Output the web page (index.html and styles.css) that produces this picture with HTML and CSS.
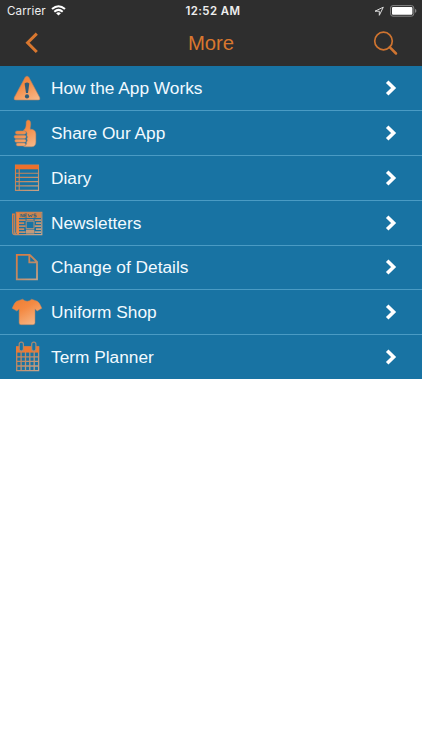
FILE: index.html
```
<!DOCTYPE html>
<html lang="en">
<head>
<meta charset="utf-8">
<title>More</title>
<link rel="stylesheet" href="styles.css">
</head>
<body>
<svg class="defs" width="0" height="0" aria-hidden="true">
  <defs>
    <linearGradient id="warm" gradientUnits="userSpaceOnUse" x1="8" y1="3" x2="24" y2="30">
      <stop offset="0" stop-color="#ed8037"/><stop offset=".35" stop-color="#f48a43"/><stop offset="1" stop-color="#f6ba8c"/>
    </linearGradient>
    <linearGradient id="muted" gradientUnits="userSpaceOnUse" x1="4" y1="3" x2="27" y2="30">
      <stop offset="0" stop-color="#e17a3a"/><stop offset=".5" stop-color="#bd8965"/><stop offset="1" stop-color="#c6a58c"/>
    </linearGradient>
  </defs>
</svg>
<header class="top">
  <div class="status">
    <div class="carrier"><span>Carrier</span>
      <svg width="15" height="11" viewBox="0 0 15 11" fill="none" stroke="#fff" stroke-width="2"><path d="M1 4.1Q7.5-1.7 14 4.1M3.3 6.7Q7.5 3 11.7 6.7"/><path d="M5.1 8.2Q7.5 6.2 9.9 8.2L7.5 10.6Z" fill="#fff" stroke="none"/></svg>
    </div>
    <div class="time">12:52 AM</div>
    <div class="indicators">
      <svg width="11" height="11" viewBox="0 0 11 11" fill="none" stroke="#ddd" stroke-width="1"><path d="M9.3 1.2L1 5.2H5.3V9.3Z"/></svg>
      <svg width="27" height="12" viewBox="0 0 27 12"><rect x=".6" y=".6" width="23.2" height="10.6" rx="2.4" fill="none" stroke="#858585"/><rect x="2" y="2" width="20.4" height="7.8" rx="1" fill="#fff"/><path d="M25 4Q26.4 4.3 26.4 5.9T25 7.8Z" fill="#858585"/></svg>
    </div>
  </div>
  <nav class="nav">
    <svg class="back" width="14" height="22" viewBox="0 0 14 22" fill="none" stroke="#d8772f" stroke-width="3"><path d="M11.8 1.6L2.6 10.8 11.8 20"/></svg>
    <h1>More</h1>
    <svg class="search" width="25" height="25" viewBox="0 0 25 25" fill="none" stroke="#cf7430"><circle cx="10.5" cy="10" r="8.8" stroke-width="1.7"/><path d="M16.7 16.2L23 22.5" stroke-width="2.5" stroke-linecap="round"/></svg>
  </nav>
</header>
<main class="menu">
  <div class="row">
    <svg class="icon" viewBox="0 0 32 32"><path d="M16 4.2Q17.2 4.2 18 5.6L28.6 25.2Q29.8 28 27.2 28H4.8Q2.2 28 3.4 25.2L14 5.6Q14.8 4.2 16 4.2Z" fill="url(#warm)" stroke="#a98369" stroke-width=".6"/><path d="M13.6 11.4Q16 9.5 18.3 11.4L17 21H15Z" fill="#315c78"/><circle cx="16" cy="24.4" r="2.1" fill="#315c78"/></svg>
    <span>How the App Works</span><svg class="go" viewBox="0 0 12 16"><path d="M2.2 1.8L8.6 8 2.2 14.2"/></svg>
  </div>
  <div class="row">
    <svg class="icon" viewBox="0 0 32 32"><path d="M12.2 13.5C15.6 11.6 15 7.2 15.2 5.1C15.5 2.4 18.9 2.4 19.5 5.1C20.2 8 19 10 19.2 12.3C22.3 12 24.9 13.8 24.9 17V25Q24.9 29.6 20.5 29.8H14Q12.7 29.8 12.4 28.8Q16.4 28.2 15.5 25.2Q17.2 23.8 15.9 21.8Q17.4 20 15.8 18.2Q17 15.2 14.2 14.3Z" fill="url(#warm)" stroke="#ae8568" stroke-width=".5"/><g fill="url(#warm)" stroke="#ae8568" stroke-width=".5"><rect x="4.4" y="13.9" width="10.6" height="3.3" rx="1.6"/><rect x="3.1" y="18.2" width="12" height="3.2" rx="1.6"/><rect x="3.8" y="22.3" width="11.2" height="3" rx="1.5"/><rect x="5.3" y="26.1" width="9.2" height="2.8" rx="1.4"/></g></svg>
    <span>Share Our App</span><svg class="go" viewBox="0 0 12 16"><path d="M2.2 1.8L8.6 8 2.2 14.2"/></svg>
  </div>
  <div class="row">
    <svg class="icon" viewBox="0 0 32 32" fill="none" stroke="url(#muted)"><path d="M4.5 3H27.5V28.4H4.5ZM8.2 7V28" stroke-width="1.1"/><path d="M4.5 3H27.5V7.3H4.5Z" fill="#ec702c" stroke="none"/><path d="M5 11.2H27M5 15.4H27M5 19.6H27M5 23.9H27" stroke-width="1.1"/></svg>
    <span>Diary</span><svg class="go" viewBox="0 0 12 16"><path d="M2.2 1.8L8.6 8 2.2 14.2"/></svg>
  </div>
  <div class="row">
    <svg class="icon" viewBox="0 0 32 32"><path d="M5.3 5.3H30.8V27.6H4Q1.6 27.6 1.6 25.2V7.2H3.3V25.6Q4.3 27 5.3 25.6Z" fill="#1873a3" stroke="url(#muted)" stroke-width="1.2"/><path d="M5.8 6H8V27H5.8Z" fill="#e98645"/><path d="M8 5.6H30V11H8Z" fill="#cb8450"/><path d="M10 10V7L12.2 10V7M16 7H13.7V10H16M13.7 8.5H15.5M17.2 7L18.2 10 19.3 8 20.4 10 21.4 7M25.3 7H23V8.5H25.2V10H22.8" fill="none" stroke="#3a6379" stroke-width=".9"/><path d="M8 13.1H14.6M8 16.1H13.2M8 19.1H14.6M8 22.1H13.2M8 25.1H14.6M23.6 13.1H30M25 16.1H30M23.6 19.1H30M25 22.1H30M23.6 25.1H30M15.5 12.8H22.5" stroke="url(#muted)" stroke-width="1.6"/><path d="M15 22.6H23.3V26.6H15Z" fill="#c39a7b"/><path d="M15.2 14.2H23V21.6H15.2Z" fill="#1873a3" stroke="#c29473" stroke-width=".9"/></svg>
    <span>Newsletters</span><svg class="go" viewBox="0 0 12 16"><path d="M2.2 1.8L8.6 8 2.2 14.2"/></svg>
  </div>
  <div class="row">
    <svg class="icon" viewBox="0 0 32 32" fill="none" stroke="url(#muted)" stroke-width="1.8"><path d="M5.8 3.8H18.7L26 11V28.4H5.8ZM18.3 4V11.3H26"/></svg>
    <span>Change of Details</span><svg class="go" viewBox="0 0 12 16"><path d="M2.2 1.8L8.6 8 2.2 14.2"/></svg>
  </div>
  <div class="row">
    <svg class="icon" viewBox="0 0 32 32"><path d="M11.6 3.2Q16.2 7.2 20.7 3.2L26.4 5.3Q28.1 6 30.9 12.2L26.1 15.1 24 12.9V26.8Q24 28.7 22 28.7H10Q8.1 28.7 8.1 26.8V12.9L5.9 15.1 1.1 12.2Q3.9 6 5.6 5.3Z" fill="url(#warm)" stroke="#b38465" stroke-width=".5"/></svg>
    <span>Uniform Shop</span><svg class="go" viewBox="0 0 12 16"><path d="M2.2 1.8L8.6 8 2.2 14.2"/></svg>
  </div>
  <div class="row">
    <svg class="icon" viewBox="0 0 32 32" fill="none" stroke="url(#muted)"><path d="M5.7 6H27.6V29.7H5.7Z" stroke-width="1.3"/><path d="M5.2 5.5H28.1V11.6H5.2Z" fill="#ee7931" stroke="none"/><path d="M10.1 11V29.5M14.5 11V29.5M18.8 11V29.5M23.2 11V29.5M6 15.8H27M6 20.4H27M6 25H27" stroke-width="1.3"/><g fill="#1873a3" stroke="#a98a72" stroke-width="1.2"><rect x="8.2" y="1.2" width="4.2" height="8.8" rx="2"/><rect x="20.7" y="1.2" width="4.2" height="8.8" rx="2"/></g></svg>
    <span>Term Planner</span><svg class="go" viewBox="0 0 12 16"><path d="M2.2 1.8L8.6 8 2.2 14.2"/></svg>
  </div>
</main>
</body>
</html>
```
FILE: styles.css
```
* { box-sizing: border-box; }
body {
  margin: 0;
  background: #fff;
  font-family: "Liberation Sans", Arial, sans-serif;
}
.defs { display: block; }
.top {
  height: 65.5px;
  background: #2e2e2e;
}
.status {
  height: 22px;
  padding: 0 7px;
  display: grid;
  grid-template-columns: 1fr auto 1fr;
  align-items: center;
  color: #eee;
  font-family: Inter, Roboto, sans-serif;
  font-size: 11.6px;
}
.carrier { display: flex; align-items: center; gap: 5px; letter-spacing: .1px; }
.carrier svg { margin-top: -1px; }
.time { font-weight: 600; font-size: 11.4px; letter-spacing: .45px; padding-left: 4px; }
.indicators { display: flex; justify-content: flex-end; align-items: center; gap: 5px; margin-right: -2px; }
.nav {
  height: 43px;
  padding: 0 24px 0 25px;
  display: grid;
  grid-template-columns: 1fr auto 1fr;
  align-items: center;
  color: #d8772f;
}
.nav h1 { margin: 0 1px 0 0; padding-bottom: 2px; font-size: 20.3px; font-weight: 400; line-height: 24px; }
.back { margin-top: -1px; }
.search { justify-self: end; }
.menu { background: #1873a3; }
.row {
  height: 44.78px;
  padding: 0 25px 0 11px;
  display: flex;
  align-items: center;
  color: #f2faff;
  font-size: 17.3px;
}
.row + .row { border-top: 1px solid #4a9bc4; }
.icon { width: 32px; height: 32px; flex: none; }
.row span { flex: 1; padding-left: 8px; line-height: 22px; }
.go { width: 12px; height: 16px; fill: none; stroke: #fff; stroke-width: 3.6; }
```
